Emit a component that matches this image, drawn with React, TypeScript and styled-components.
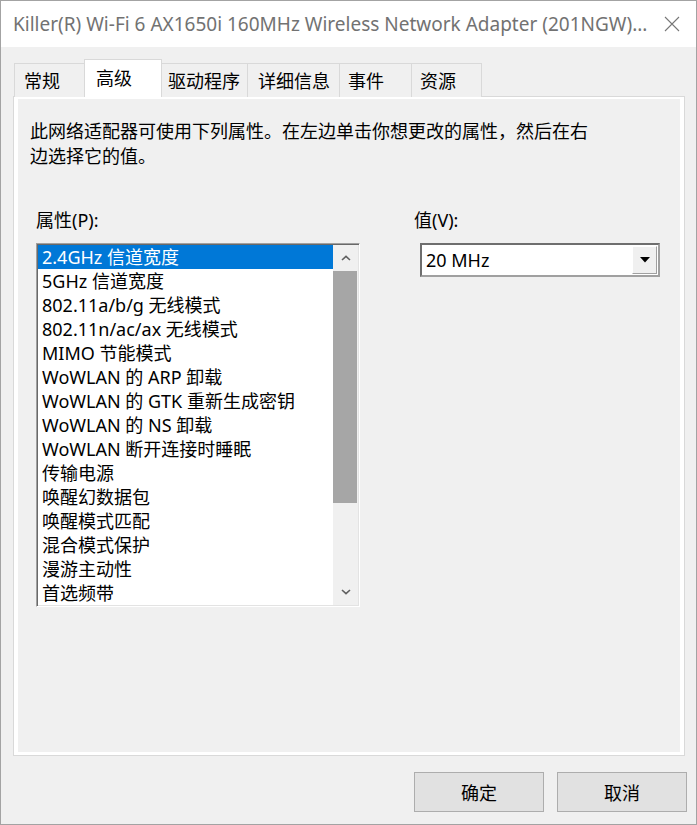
import React from "react";
import styled, { createGlobalStyle } from "styled-components";

const GlobalStyle = createGlobalStyle`
  html, body {
    margin: 0;
    padding: 0;
    background: #ffffff;
  }
  body {
    font-family: "Noto Sans", "Noto Sans CJK SC", sans-serif;
  }
  * {
    box-sizing: border-box;
  }
`;

const Window = styled.div`
  width: 697px;
  height: 825px;
  background: #f0f0f0;
  border: 1px solid #a3a3a3;
  display: flex;
  flex-direction: column;
  font-size: 18px;
  color: #000;
`;

const TitleBar = styled.div`
  height: 46px;
  background: #fff;
  display: flex;
  align-items: center;
  padding-left: 12px;
`;

const Title = styled.div`
  flex: 1;
  color: #727272;
  font-size: 19px;
  white-space: nowrap;
  overflow: hidden;
`;

const CloseButton = styled.div`
  width: 48px;
  height: 46px;
  display: flex;
  align-items: center;
  justify-content: center;
`;

const TabStrip = styled.div`
  display: flex;
  align-items: flex-end;
  padding: 12px 0 0 14px;
  margin-bottom: -1px;
`;

const Tab = styled.div<{ $active?: boolean; $w: number; $pad: number }>`
  width: ${(p) => p.$w}px;
  height: ${(p) => (p.$active ? 38 : 34)}px;
  margin-left: -1px;
  padding-left: ${(p) => p.$pad}px;
  padding-bottom: ${(p) => (p.$active ? 3 : 1)}px;
  border: 1px solid #d9d9d9;
  border-bottom: none;
  background: ${(p) => (p.$active ? "#ffffff" : "#f0f0f0")};
  position: relative;
  z-index: ${(p) => (p.$active ? 1 : 0)};
  display: flex;
  align-items: center;
  white-space: nowrap;
`;

const Panel = styled.div`
  margin: 0 11px 0 12px;
  height: 660px;
  border: 1px solid #d9d9d9;
  box-shadow: inset 4px 2px 0 #fff, inset -4px -3px 0 #fff;
  display: flex;
  flex-direction: column;
`;

const Description = styled.p`
  margin: 22px 0 0 16px;
  width: 566px;
  line-height: 25px;
`;

const Columns = styled.div`
  display: flex;
  margin-top: 39px;
  padding-left: 22px;
`;

const Column = styled.div<{ $w: number; $gap?: number }>`
  width: ${(p) => p.$w}px;
  margin-left: ${(p) => p.$gap ?? 0}px;
  display: flex;
  flex-direction: column;
`;

const Label = styled.div`
  height: 25px;
  line-height: 25px;
  margin-bottom: 10px;
`;

const ListBox = styled.div`
  width: 324px;
  height: 364px;
  padding: 1px;
  border: 1px solid;
  border-color: #a0a0a0 #ffffff #ffffff #a0a0a0;
  box-shadow: inset 1px 1px 0 #696969, inset -1px -1px 0 #e3e3e3;
  display: flex;
  background: #fff;
`;

const Rows = styled.div`
  flex: 1;
  overflow: hidden;
`;

const Row = styled.div<{ $selected?: boolean }>`
  height: 24px;
  line-height: 24px;
  padding-left: 4px;
  white-space: nowrap;
  background: ${(p) => (p.$selected ? "#0078d7" : "transparent")};
  color: ${(p) => (p.$selected ? "#ffffff" : "#000000")};
`;

const ScrollBar = styled.div`
  width: 25px;
  background: #f0f0f0;
  display: flex;
  flex-direction: column;
`;

const ScrollArrow = styled.div`
  height: 26px;
  display: flex;
  align-items: center;
  justify-content: center;
`;

const Thumb = styled.div`
  height: 232px;
  margin-right: 1px;
  background: #a6a6a6;
`;

const Track = styled.div`
  flex: 1;
`;

const Combo = styled.div`
  width: 240px;
  height: 34px;
  margin-left: 6px;
  border: 2px solid;
  border-color: #6e6e6e #a0a0a0 #a0a0a0 #6e6e6e;
  background: #fff;
  display: flex;
  align-items: stretch;
`;

const ComboValue = styled.div`
  flex: 1;
  padding-left: 4px;
  line-height: 30px;
`;

const ComboButton = styled.div`
  width: 25px;
  margin: 1px;
  background: #f0f0f0;
  border: 1px solid;
  border-color: #ffffff #a0a0a0 #a0a0a0 #ffffff;
  display: flex;
  align-items: center;
  justify-content: center;
`;

const ButtonRow = styled.div`
  display: flex;
  justify-content: flex-end;
  gap: 13px;
  margin-top: 16px;
  padding-right: 9px;
`;

const DialogButton = styled.button`
  width: 130px;
  height: 40px;
  background: #e1e1e1;
  border: 1px solid #adadad;
  font-family: inherit;
  font-size: 18px;
  color: #000;
  padding: 0;
`;

const tabs = [
  { label: "常规", w: 71, pad: 9 },
  { label: "高级", w: 78, pad: 11, active: true },
  { label: "驱动程序", w: 87, pad: 6 },
  { label: "详细信息", w: 93, pad: 10 },
  { label: "事件", w: 73, pad: 8 },
  { label: "资源", w: 71, pad: 8 },
];

const properties = [
  "2.4GHz 信道宽度",
  "5GHz 信道宽度",
  "802.11a/b/g 无线模式",
  "802.11n/ac/ax 无线模式",
  "MIMO 节能模式",
  "WoWLAN 的 ARP 卸载",
  "WoWLAN 的 GTK 重新生成密钥",
  "WoWLAN 的 NS 卸载",
  "WoWLAN 断开连接时睡眠",
  "传输电源",
  "唤醒幻数据包",
  "唤醒模式匹配",
  "混合模式保护",
  "漫游主动性",
  "首选频带",
];

const Chevron = ({ up }: { up?: boolean }) => (
  <svg width="10" height="6" viewBox="0 0 10 6">
    <polyline
      points={up ? "1,5 5,1.3 9,5" : "1,1 5,4.7 9,1"}
      fill="none"
      stroke="#606060"
      strokeWidth="1.6"
    />
  </svg>
);

const App = () => {
  return (
    <>
      <GlobalStyle />
      <Window>
        <TitleBar>
          <Title>Killer(R) Wi-Fi 6 AX1650i 160MHz Wireless Network Adapter (201NGW)...</Title>
          <CloseButton>
            <svg width="16" height="16" viewBox="0 0 16 16">
              <path d="M1 1 L15 15 M15 1 L1 15" stroke="#777" strokeWidth="1.1" />
            </svg>
          </CloseButton>
        </TitleBar>

        <TabStrip>
          {tabs.map((t) => (
            <Tab key={t.label} $active={t.active} $w={t.w} $pad={t.pad}>
              {t.label}
            </Tab>
          ))}
        </TabStrip>

        <Panel>
          <Description>
            此网络适配器可使用下列属性。在左边单击你想更改的属性，然后在右边选择它的值。
          </Description>
          <Columns>
            <Column $w={324}>
              <Label>属性(P):</Label>
              <ListBox>
                <Rows>
                  {properties.map((p, i) => (
                    <Row key={p} $selected={i === 0}>
                      {p}
                    </Row>
                  ))}
                </Rows>
                <ScrollBar>
                  <ScrollArrow>
                    <Chevron up />
                  </ScrollArrow>
                  <Thumb />
                  <Track />
                  <ScrollArrow>
                    <Chevron />
                  </ScrollArrow>
                </ScrollBar>
              </ListBox>
            </Column>
            <Column $w={246} $gap={54}>
              <Label>值(V):</Label>
              <Combo>
                <ComboValue>20 MHz</ComboValue>
                <ComboButton>
                  <svg width="10" height="6" viewBox="0 0 10 6">
                    <polygon points="0,0 10,0 5,5.5" fill="#000" />
                  </svg>
                </ComboButton>
              </Combo>
            </Column>
          </Columns>
        </Panel>

        <ButtonRow>
          <DialogButton>确定</DialogButton>
          <DialogButton>取消</DialogButton>
        </ButtonRow>
      </Window>
    </>
  );
};

export default App;
